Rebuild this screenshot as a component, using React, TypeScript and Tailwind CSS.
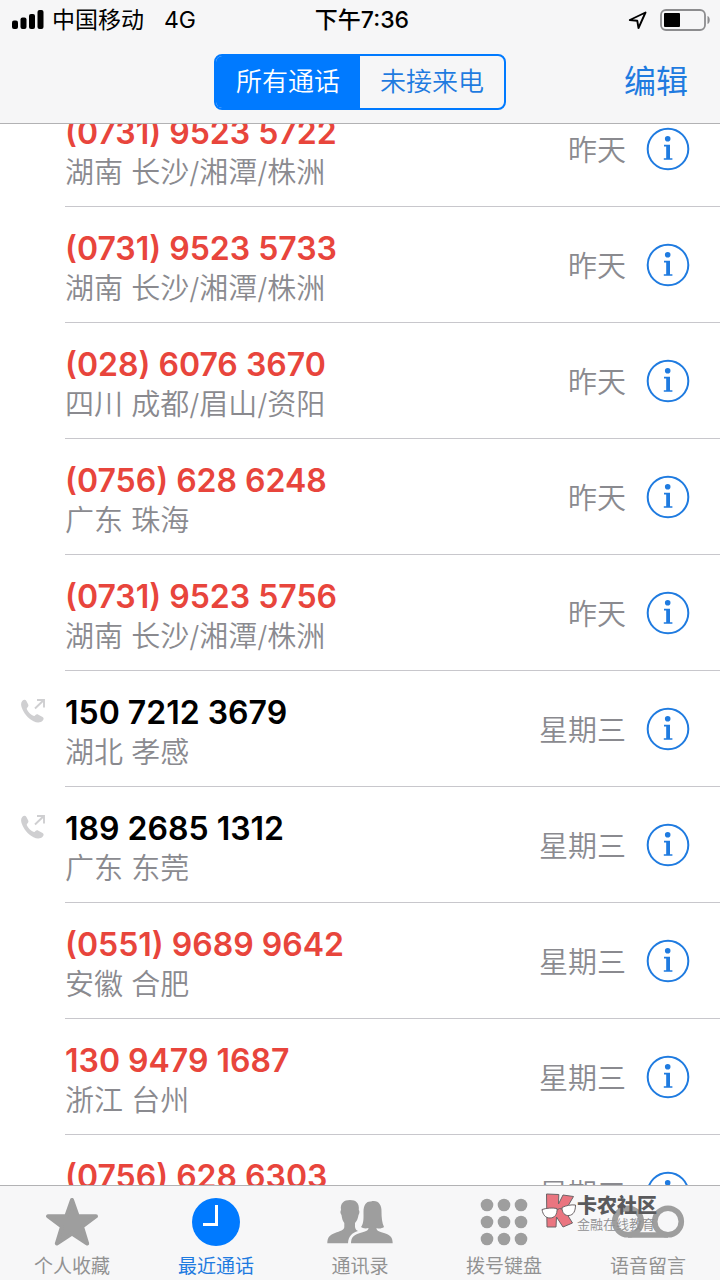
import React, { useState } from 'react';

interface Chamada {
  numero: string;
  local: string;
  data: string;
  perdida: boolean;
}

const chamadas: Chamada[] = [
  { numero: '(0731) 9523 5722', local: '湖南 长沙/湘潭/株洲', data: '昨天', perdida: true },
  { numero: '(0731) 9523 5733', local: '湖南 长沙/湘潭/株洲', data: '昨天', perdida: true },
  { numero: '(028) 6076 3670', local: '四川 成都/眉山/资阳', data: '昨天', perdida: true },
  { numero: '(0756) 628 6248', local: '广东 珠海', data: '昨天', perdida: true },
  { numero: '(0731) 9523 5756', local: '湖南 长沙/湘潭/株洲', data: '昨天', perdida: true },
  { numero: '150 7212 3679', local: '湖北 孝感', data: '星期三', perdida: false },
  { numero: '189 2685 1312', local: '广东 东莞', data: '星期三', perdida: false },
  { numero: '(0551) 9689 9642', local: '安徽 合肥', data: '星期三', perdida: true },
  { numero: '130 9479 1687', local: '浙江 台州', data: '星期三', perdida: true },
  { numero: '(0756) 628 6303', local: '广东 珠海', data: '星期三', perdida: true },
];

const SignalIcon = () => (
  <svg width="32" height="20" viewBox="0 0 32 20" aria-hidden="true">
    <rect x="0" y="10.500" width="6" height="8.500" rx="2" />
    <rect x="8.500" y="7.500" width="6" height="11.500" rx="2" />
    <rect x="17" y="4" width="6" height="15" rx="2" />
    <rect x="25.500" y="0" width="6" height="19" rx="2" />
  </svg>
);

const LocationIcon = () => (
  <svg width="20" height="20" viewBox="0 0 20 20" fill="none" stroke="#000" strokeWidth="1.900" strokeLinejoin="round" aria-hidden="true">
    <path d="M17.500 2.500 10.500 18 9.300 10.800 1.800 10Z" />
  </svg>
);

const BatteryIcon = () => (
  <svg width="52" height="22" viewBox="0 0 52 22" aria-hidden="true">
    <rect x="1" y="1" width="44" height="20" rx="5" fill="none" stroke="#8c8c8e" strokeWidth="1.800" />
    <rect x="4" y="4" width="16" height="14" rx="1" />
    <path d="M47.500 7c3 1 3 7 0 8z" fill="#8c8c8e" />
  </svg>
);

const InfoIcon = () => (
  <svg width="44" height="44" viewBox="0 0 44 44" fill="none" aria-hidden="true">
    <circle cx="22" cy="22" r="20.300" stroke="#1f7be0" strokeWidth="2" />
    <circle cx="21.700" cy="11.800" r="2.800" fill="#1f7be0" />
    <path d="M18 17.800h6v13.400h2.400v1.600h-8.600v-1.600h2.400V19.400H18z" fill="#1f7be0" />
  </svg>
);

const OutgoingIcon = () => (
  <svg width="24" height="24" viewBox="0 0 24 24" aria-hidden="true">
    <path d="M1.200 2C2.800.2 4.600.4 5.400 2l1.800 3.600c.5 1.200.2 2-1 3.200-.7.8-.5 1.400 0 2.200 1.500 2.400 3.200 4.200 5.600 5.600 1 .6 1.500.6 2.200-.1 1.200-1.300 2.200-1.400 3.400-.8l4.200 2.400c1.300.8 1.400 2 .2 3.400C19.500 24 16 24 12.500 22.200 7 19.300 2.800 14.500.8 8.800-.2 6-.2 3.600 1.200 2z" fill="#cfcfd1" />
    <path d="M14 9.500 22.300 1.500M16 1h7v7.500" fill="none" stroke="#cfcfd1" strokeWidth="1.900" />
  </svg>
);

const StarIcon = () => (
  <svg width="54" height="52" viewBox="0 0 54 52" fill="#9e9e9e" stroke="#9e9e9e" strokeWidth="4" strokeLinejoin="round" aria-hidden="true">
    <path d="M27 4 32.700 20.200 51 20.200 37 30.600 42.200 47.500 27 37.500 11.800 47.500 17 30.600 3 20.200 21.300 20.200Z" />
  </svg>
);

const ClockIcon = () => (
  <svg width="48" height="48" viewBox="0 0 48 48" aria-hidden="true">
    <circle cx="24" cy="24" r="24" fill="#007aff" />
    <path d="M24.500 7v19.500H11" fill="none" stroke="#fff" strokeWidth="3" />
  </svg>
);

const ContactsIcon = () => (
  <svg width="66" height="46" viewBox="0 0 66 46" fill="#9e9e9e" aria-hidden="true">
    <path d="M.3 44.300C.3 38 3 36 8 34c5-2 9.300-3 9.300-6v-4c-1.800-2-2.300-5-2.800-8-1.500-2-1.200-4-.5-5C13 4 17 1 23 1s9.500 3 8.800 10c1 1 .7 3.500-.3 5-.5 3-1.500 6-3.500 8v4c.5 3 2 3.500 3 4-6 2-9.500 5-10 12.300z" />
    <path d="M24 44.300c0-6.300 3-8.300 9-10.300 5-1.500 8.500-2 8.500-5-3.500 1-6 0-7.500-1 3-4 2.500-10 2.500-15 0-8 3.500-11 7.500-10.500C51 .5 55 6 54.500 13c0 5 .5 11 2.500 15-2 1.500-5 2-7.500 1 0 3 2.500 3.500 7.500 5 6 2 8.700 4 8.700 10.300z" />
  </svg>
);

const KeypadIcon = () => (
  <svg width="48" height="48" viewBox="0 0 48 48" fill="#9e9e9e" aria-hidden="true">
    {[7, 24, 41].map(cy => [7, 24, 41].map(cx => <circle key={`${cx}-${cy}`} cx={cx} cy={cy} r="6.300" />))}
  </svg>
);

const VoicemailIcon = () => (
  <svg width="74" height="36" viewBox="0 0 74 36" fill="none" stroke="#9e9e9e" strokeWidth="5.600" aria-hidden="true">
    <circle cx="17" cy="17.500" r="13.300" />
    <circle cx="57" cy="17.500" r="13.300" />
    <path d="M17 31h40" />
  </svg>
);

const LogoK = () => (
  <svg width="36" height="36" viewBox="0 0 36 36" stroke="#6b6467" strokeWidth="1" strokeLinejoin="round" aria-hidden="true">
    <path d="M5.500 1 17.800 1.500 17.500 11 22 2 32.500 3.500 24 18 31.500 30 22 34 15.500 24 15 34H6z" fill="#ea7580" />
    <path d="M1 16.500c5-1.500 10-2 15-1 .5 6-2.500 9.500-7 9.500s-7-3-8-8.500zM21 14.500c4-2 9-3 13.500-2.500 0 6-2 10-6.500 10.500-4 .5-7-2.500-7-8z" fill="#fff" />
    <path d="M16 17q2.500-2.500 5-1" fill="none" />
  </svg>
);

const abas = [
  { nome: '个人收藏', icone: <StarIcon /> },
  { nome: '最近通话', icone: <ClockIcon /> },
  { nome: '通讯录', icone: <ContactsIcon /> },
  { nome: '拨号键盘', icone: <KeypadIcon /> },
  { nome: '语音留言', icone: <VoicemailIcon /> },
];

const StatusBar: React.FC = () => (
  <div className="grid h-10 grid-cols-3 items-center pr-2 pl-3 text-[23px] leading-8">
    <div className="flex items-center gap-2">
      <SignalIcon />
      <span>中国移动</span>
      <span className="ml-3">4G</span>
    </div>
    <span className="text-center font-medium">下午7:36</span>
    <div className="flex items-center justify-end gap-3">
      <LocationIcon />
      <BatteryIcon />
    </div>
  </div>
);

interface LinhaProps {
  chamada: Chamada;
}

const Linha: React.FC<LinhaProps> = ({ chamada }) => (
  <li className="flex h-[116px]">
    <div className="w-[65px] shrink-0 pt-7 pl-[21px]">{!chamada.perdida && <OutgoingIcon />}</div>
    <div className="flex flex-1 items-center border-b border-[#c8c7cc] pr-[30px]">
      <div className="flex-1 pt-2">
        <p className={`text-[32px] leading-10 font-semibold ${chamada.perdida ? 'text-[#e8453c]' : 'text-black'}`}>{chamada.numero}</p>
        <p className="text-[29px] leading-10 font-[350] text-[#8a8a8f]">{chamada.local}</p>
      </div>
      <span className="mr-5 pt-1 text-[29px] font-[350] text-[#8a8a8f]">{chamada.data}</span>
      <button type="button" aria-label={chamada.numero}><InfoIcon /></button>
    </div>
  </li>
);

const App: React.FC = () => {
  const [filtro, setFiltro] = useState('todas');
  const [aba, setAba] = useState('最近通话');

  const visiveis = filtro === 'todas' ? chamadas : chamadas.filter(c => c.perdida);

  return (
    <div className="flex h-screen flex-col overflow-hidden bg-white font-[Inter,'Noto_Sans_CJK_SC',sans-serif] text-black">
      <header className="shrink-0 border-b border-[#b2b2b4] bg-[#f6f6f7]">
        <StatusBar />
        <div className="grid h-[83px] grid-cols-[1fr_auto_1fr] items-center pr-8">
          <div className="col-start-2 ml-8 flex h-14 w-[292px] overflow-hidden rounded-lg border-2 border-[#007aff] text-[26px] font-[350]">
            <button type="button" onClick={() => setFiltro('todas')} className={`flex-1 ${filtro === 'todas' ? 'bg-[#007aff] text-white' : 'text-[#1f7be0]'}`}>所有通话</button>
            <button type="button" onClick={() => setFiltro('perdidas')} className={`flex-1 ${filtro === 'perdidas' ? 'bg-[#007aff] text-white' : 'text-[#1f7be0]'}`}>未接来电</button>
          </div>
          <button type="button" className="justify-self-end text-[32px] text-[#1f7be0]">编辑</button>
        </div>
      </header>

      <main className="min-h-0 flex-1 overflow-hidden">
        <ul className="-mt-[33px]">
          {visiveis.map(c => <Linha key={c.numero} chamada={c} />)}
        </ul>
      </main>

      <nav className="relative grid shrink-0 grid-cols-5 border-t border-[#b2b2b4] bg-[#f7f7f8]">
        {abas.map(a => (
          <button
            key={a.nome}
            type="button"
            onClick={() => setAba(a.nome)}
            className={`flex flex-col items-center pt-1 ${aba === a.nome ? 'text-[#1f7be0]' : 'text-[#929292]'}`}
          >
            <span className="flex h-16 items-center">{a.icone}</span>
            <span className="text-[19px] leading-[26px]">{a.nome}</span>
          </button>
        ))}
        {/* Marca d'água */}
        <div className="pointer-events-none absolute top-1.5 right-[63px] flex items-center">
          <LogoK />
          <div className="pt-0.5">
            <p className="text-[20px] leading-6 font-black text-[#5a5a5c]">卡农社区</p>
            <p className="text-[13px] leading-3 font-[350] text-[#8f8f91]">金融在线教育</p>
          </div>
        </div>
      </nav>
    </div>
  );
};

export default App;
